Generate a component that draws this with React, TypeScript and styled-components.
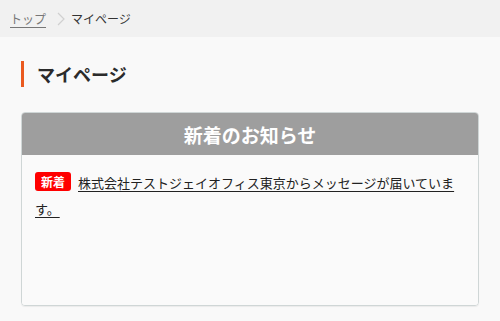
import React from 'react';
import styled, { createGlobalStyle } from 'styled-components';

const GlobalStyle = createGlobalStyle`
    html, body {
        margin: 0;
        padding: 0;
        background: #f9f9f9;
    }

    body {
        font-family: "Noto Sans CJK JP", "Noto Sans", sans-serif;
        color: #333;
    }
`;

const Page = styled.div`
    width: 500px;
    min-height: 321px;
    background: #f9f9f9;
`;

const Breadcrumb = styled.nav`
    display: flex;
    align-items: center;
    height: 37px;
    padding: 0 10px;
    background: #f1f1f1;
    font-size: 12px;
    line-height: 1;
`;

const CrumbLink = styled.a`
    color: #777;
    text-decoration: underline;
    text-underline-offset: 3px;
`;

const CrumbSep = styled.svg`
    width: 8px;
    height: 14px;
    margin: 0 6px 0 11px;
    fill: none;
    stroke: #d0d0d0;
    stroke-width: 1.2;
`;

const CrumbCurrent = styled.span`
    color: #333;
`;

const Main = styled.main`
    padding: 24px 21px 0;
`;

const Heading = styled.h1`
    margin: 0;
    padding-left: 13px;
    border-left: 3px solid #ea5a1f;
    font-size: 18px;
    font-weight: 700;
    line-height: 26px;
    color: #2b2b2b;
`;

const Card = styled.section`
    margin-top: 25px;
    border: 1px solid #cfd6d6;
    border-radius: 4px;
    overflow: hidden;
    box-shadow: 0 1px 1px rgba(0, 0, 0, 0.06);
`;

const CardHeader = styled.h2`
    margin: 0;
    height: 42px;
    display: flex;
    align-items: center;
    justify-content: center;
    background: #9e9e9e;
    color: #fff;
    font-size: 19px;
    font-weight: 700;
`;

const CardBody = styled.div`
    min-height: 150px;
    box-sizing: border-box;
    padding: 15px 14px 15px 13px;
    background: #fafafa;
`;

const News = styled.p`
    margin: 0;
    font-size: 13px;
    line-height: 26px;
`;

const Badge = styled.span`
    display: inline-block;
    padding: 0 6px;
    margin-right: 7px;
    border-radius: 3px;
    background: #ff0000;
    color: #fff;
    font-size: 12px;
    font-weight: 700;
    line-height: 19px;
    vertical-align: 1px;
`;

const NewsLink = styled.a`
    color: #222;
    text-decoration: underline;
    text-underline-offset: 3px;
`;

export default function App() {
    return (
        <>
            <GlobalStyle />
            <Page>
                <Breadcrumb>
                    <CrumbLink href="#">トップ</CrumbLink>
                    <CrumbSep viewBox="0 0 8 14">
                        <polyline points="1,1 7,7 1,13" />
                    </CrumbSep>
                    <CrumbCurrent>マイページ</CrumbCurrent>
                </Breadcrumb>
                <Main>
                    <Heading>マイページ</Heading>
                    <Card>
                        <CardHeader>新着のお知らせ</CardHeader>
                        <CardBody>
                            <News>
                                <Badge>新着</Badge>
                                <NewsLink href="#">
                                    株式会社テストジェイオフィス東京からメッセージが届いています。
                                </NewsLink>
                            </News>
                        </CardBody>
                    </Card>
                </Main>
            </Page>
        </>
    );
}
